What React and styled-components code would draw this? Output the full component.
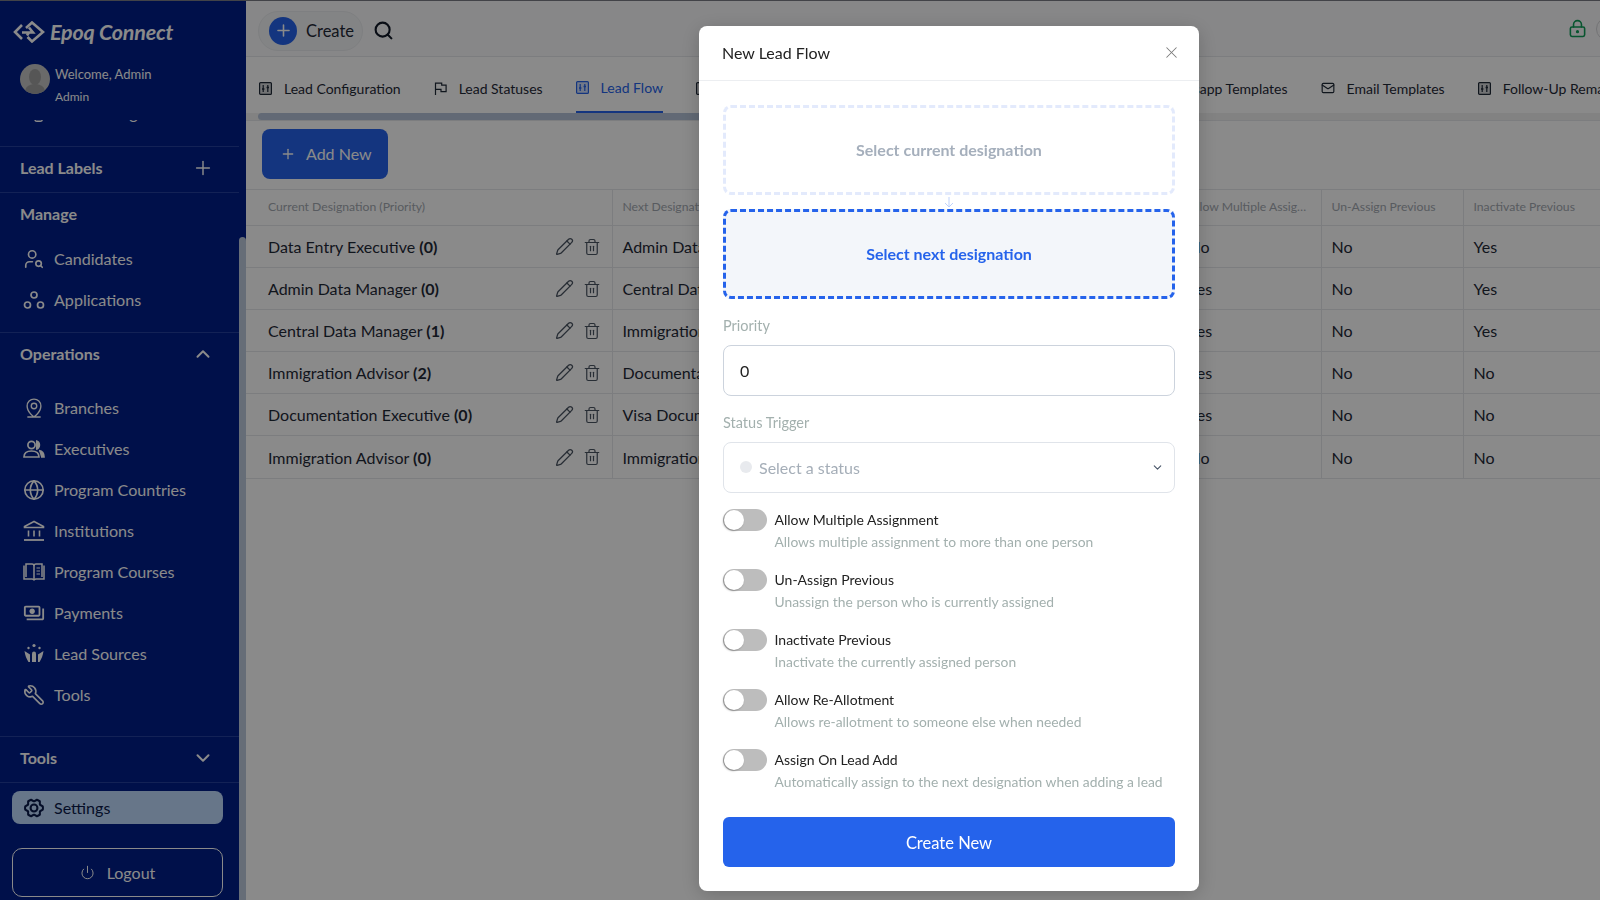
import React from "react";
import styled, { createGlobalStyle } from "styled-components";
import {
  UserSearch,
  Plus,
  ChevronUp,
  ChevronDown,
  Globe,
  Wrench,
  Search,
  LockKeyhole,
  Trash2,
  Pencil,
  Mail,
  X,
  Power,
  Workflow,
} from "lucide-react";
import { PiGearSixBold, PiMapPinLine } from "react-icons/pi";
import { MdOutlinePayments } from "react-icons/md";

const GlobalStyle = createGlobalStyle`
  html, body {
    margin: 0;
    padding: 0;
    height: 100%;
    background: #fff;
    font-family: Lato, "Open Sans", sans-serif;
    color: #1f2937;
  }
  * { box-sizing: border-box; }
`;

const Page = styled.div`
  display: grid;
  grid-template-columns: 246px 1fr;
  width: 1600px;
  height: 900px;
  overflow: hidden;
  border-top: 1px solid #7a7d85;
`;

const Sidebar = styled.aside`
  display: flex;
  flex-direction: column;
  height: 899px;
  background: #001e89;
  color: #fff;
  overflow: hidden;
`;

const Brand = styled.div`
  display: flex;
  align-items: center;
  gap: 5px;
  height: 45px;
  padding: 17px 0 0 13px;
  font-size: 21.5px;
  font-style: italic;
  font-weight: 700;
  letter-spacing: -0.2px;
`;

const UserBox = styled.div`
  display: flex;
  gap: 5px;
  height: 72px;
  padding: 18px 0 0 20px;
`;

const Avatar = styled.div`
  position: relative;
  width: 30px;
  height: 30px;
  border-radius: 50%;
  background: #c4c4c4;
  overflow: hidden;
  flex-shrink: 0;
  &::before {
    content: "";
    position: absolute;
    left: 9px;
    top: 5px;
    width: 12px;
    height: 16px;
    border-radius: 50%;
    background: #a0a0a0;
  }
  &::after {
    content: "";
    position: absolute;
    left: 5px;
    top: 20px;
    width: 20px;
    height: 14px;
    border-radius: 50%;
    background: #a0a0a0;
  }
`;

const UserText = styled.div`
  display: flex;
  flex-direction: column;
  gap: 8px;
  margin-top: 2px;
  font-size: 13px;
  line-height: 16px;
  small {
    font-size: 12px;
    line-height: 14px;
  }
`;

const SideScroll = styled.div`
  display: grid;
  grid-template-columns: 239px 7px;
  flex: 1;
  min-height: 0;
`;

const SideContent = styled.div`
  overflow: hidden;
`;

const ScrollTrack = styled.div`
  padding-top: 119px;
`;

const ScrollThumb = styled.div`
  height: 100%;
  border-radius: 4px 4px 0 0;
  background: #bcc9dc;
`;

const ClippedItem = styled.div`
  height: 26px;
  margin-top: 2px;
  overflow: hidden;
`;

const GroupHead = styled.div`
  display: flex;
  align-items: center;
  justify-content: space-between;
  height: ${(p) => p.$h || 46}px;
  padding: ${(p) => (p.$h ? 0 : "0 25px 4px 20px")};
  font-size: 16px;
  font-weight: 700;
  border-top: 1px solid #23409f;
`;

const NavList = styled.div`
  display: flex;
  flex-direction: column;
  padding: ${(p) => p.$pad};
`;

const NavItem = styled.div`
  display: flex;
  align-items: center;
  gap: 9px;
  height: 41px;
  margin-top: ${(p) => p.$shift || 0}px;
  padding-left: 23px;
  font-size: 16.1px;
  svg {
    width: 22px;
    height: 22px;
    flex-shrink: 0;
  }
`;

const FlippedWrench = styled(Wrench)`
  transform: scaleX(-1);
`;

const SettingsPill = styled.div`
  display: flex;
  align-items: center;
  gap: 9px;
  height: 33px;
  margin: 8px 16px 0 12px;
  padding-left: 11px;
  border-radius: 8px;
  background: #bfdbfe;
  color: #0b1a4a;
  font-size: 16.1px;
  svg {
    width: 22px;
    height: 22px;
  }
`;

const Logout = styled.div`
  display: flex;
  align-items: center;
  justify-content: center;
  gap: 12px;
  height: 49px;
  margin: 24px 16px 0 12px;
  border: 1px solid #fff;
  border-radius: 10px;
  font-size: 16px;
  svg {
    width: 15px;
    height: 15px;
  }
`;

const Main = styled.main`
  min-width: 0;
  overflow: hidden;
`;

const TopBar = styled.header`
  display: flex;
  align-items: center;
  height: 56px;
  padding: 4px 0 0 12px;
  background: #f9fafb;
  border-bottom: 1px solid #e5e7eb;
`;

const CreatePill = styled.div`
  display: flex;
  align-items: center;
  gap: 9px;
  width: 105px;
  height: 40px;
  padding-left: 10px;
  border: 1px solid #e9ebee;
  border-radius: 20px;
  background: #f3f4f6;
  font-size: 16.5px;
`;

const RoundPlus = styled.span`
  display: flex;
  align-items: center;
  justify-content: center;
  width: 28px;
  height: 28px;
  border-radius: 50%;
  background: #2563eb;
  color: #fff;
`;

const SearchBtn = styled.span`
  display: flex;
  margin-left: 10px;
  color: #111827;
`;

const TopRight = styled.div`
  display: flex;
  align-items: center;
  gap: 9px;
  margin: -4px -20px 0 auto;
  color: #0f9d58;
`;

const TopAvatar = styled.span`
  width: 24px;
  height: 24px;
  border: 1px solid #d4d4d8;
  border-radius: 50%;
`;

const TabBar = styled.nav`
  display: flex;
  gap: 33px;
  height: 56px;
  padding: 0 0 0 13px;
  overflow: hidden;
  white-space: nowrap;
`;

const Tab = styled.div`
  display: flex;
  align-items: center;
  gap: 12px;
  flex-shrink: 0;
  margin-left: ${(p) => p.$nudge || 0}px;
  padding-top: 6px;
  font-size: 14px;
  color: ${(p) => (p.$active ? "#2563eb" : "#1f2937")};
  border-bottom: ${(p) => (p.$active ? "2px solid #2563eb" : "0")};
`;

const TabScroll = styled.div`
  height: 8px;
  padding-left: 12px;
  background: #f1f1f1;
  border-bottom: 1px solid #e5e7eb;
`;

const TabThumb = styled.div`
  width: 760px;
  height: 7px;
  border-radius: 4px;
  background: #b5c3d8;
`;

const Toolbar = styled.div`
  padding: 8px 16px 10px;
`;

const AddButton = styled.button`
  display: flex;
  align-items: center;
  gap: 10px;
  width: 126px;
  height: 50px;
  padding: 0 0 1px 18px;
  border: 0;
  border-radius: 8px;
  background: #2563eb;
  color: #fff;
  font: 400 16px Lato, sans-serif;
`;

const Table = styled.table`
  width: 1354px;
  table-layout: fixed;
  border-collapse: collapse;
  border-top: 1px solid #e5e7eb;
  font-size: 16px;

  th {
    height: 36px;
    padding: 0 10px 2px;
    text-align: left;
    font-size: 12.2px;
    font-weight: 400;
    color: #a3a9b1;
    white-space: nowrap;
    overflow: hidden;
    text-overflow: ellipsis;
    border-right: 1px solid #e5e7eb;
    border-bottom: 1px solid #e5e7eb;
  }
  th:first-child, td:first-child {
    padding-left: 22px;
    padding-right: 11px;
  }
  td {
    height: 42px;
    padding: 0 10px;
    white-space: nowrap;
    overflow: hidden;
    border-right: 1px solid #e5e7eb;
    border-bottom: 1px solid #e5e7eb;
  }
  tr:last-child td {
    height: 43px;
  }
  th:last-child, td:last-child {
    border-right: 0;
  }
`;

const CellRow = styled.div`
  display: flex;
  align-items: center;
  justify-content: space-between;
  b {
    font-weight: 700;
  }
`;

const RowActions = styled.span`
  display: flex;
  align-items: center;
  gap: 9px;
  color: #4b5563;
`;

const Overlay = styled.div`
  position: fixed;
  inset: 0;
  display: flex;
  align-items: flex-start;
  padding: 26px 0 0 699px;
  background: rgba(0, 0, 0, 0.46);
`;

const Modal = styled.div`
  width: 500px;
  height: 865px;
  border-radius: 8px;
  background: #fff;
  box-shadow: 0 4px 20px rgba(0, 0, 0, 0.2);
`;

const ModalHead = styled.div`
  display: flex;
  align-items: center;
  justify-content: space-between;
  height: 55px;
  padding: 0 18px 2px 23px;
  border-bottom: 1px solid #eceef1;
  font-size: 16px;
  color: #222;
  svg {
    color: #7b7b7b;
  }
`;

const ModalBody = styled.div`
  padding: 24px 24px 24px;
`;

const DesignationBox = styled.div`
  display: flex;
  align-items: center;
  justify-content: center;
  height: 90px;
  padding-bottom: 2px;
  border-radius: 8px;
  border: 3px dashed ${(p) => (p.$active ? "#2563eb" : "#e3eafc")};
  background: ${(p) => (p.$active ? "#f3f6fa" : "#fff")};
  color: ${(p) => (p.$active ? "#2563eb" : "#a5afbc")};
  font-size: 16px;
  font-weight: 700;
`;

const Connector = styled.div`
  display: flex;
  justify-content: center;
  height: 14px;
  color: #bfd2fb;
`;

const FieldLabel = styled.label`
  display: block;
  margin-top: ${(p) => p.$top}px;
  font-size: 14.5px;
  line-height: 20px;
  color: #a3b0ae;
`;

const InputBox = styled.div`
  display: flex;
  align-items: center;
  height: 51px;
  margin-top: 9px;
  padding: ${(p) => (p.$soft ? "0 16px 1px" : "0 16px")};
  border: 1px solid ${(p) => (p.$soft ? "#e0e4ea" : "#ccd3dd")};
  border-radius: 8px;
  font-size: 16px;
  color: ${(p) => (p.$soft ? "#a5aeb8" : "#222")};
`;

const StatusDot = styled.span`
  width: 12px;
  height: 12px;
  margin-right: 7px;
  border-radius: 50%;
  background: #e8eaee;
`;

const SelectChevron = styled.span`
  display: flex;
  margin-left: auto;
  margin-right: -6px;
  color: #475467;
`;

const ToggleList = styled.div`
  display: flex;
  flex-direction: column;
  gap: 16px;
  margin-top: 16px;
`;

const ToggleRow = styled.div`
  display: flex;
  gap: 7.5px;
  height: 44px;
`;

const Switch = styled.span`
  position: relative;
  width: 44px;
  height: 22px;
  border-radius: 11px;
  background: #bdbdbd;
  flex-shrink: 0;
  &::after {
    content: "";
    position: absolute;
    left: 1px;
    top: 1px;
    width: 20px;
    height: 20px;
    border-radius: 50%;
    background: #fff;
    box-shadow: -1px 1px 2px rgba(0, 0, 0, 0.3);
  }
`;

const ToggleText = styled.div`
  font-size: 14px;
  line-height: 22px;
  color: #222;
  small {
    display: block;
    font-size: 13.85px;
    color: #a3b0ae;
  }
`;

const SubmitButton = styled.button`
  display: block;
  width: 100%;
  height: 50px;
  margin-top: 24px;
  padding-top: 2px;
  border: 0;
  border-radius: 6px;
  background: #2563eb;
  color: #fff;
  font: 400 16.5px Lato, sans-serif;
`;

const LogoMark = () => (
  <svg width="32" height="22" viewBox="0 0 32 22" fill="none" stroke="currentColor" strokeWidth="2.6">
    <path d="M9 4 2 11l7 7" />
    <path d="M13 7 19 1.5 30 11 19 20.5 14.5 16" />
    <path d="M9 11.5h11l-4-5M16 11.5l-2 3" />
  </svg>
);

const SlidersBox = () => (
  <svg width="13" height="13" viewBox="0 0 13 13" fill="none" stroke="currentColor" strokeWidth="1.2">
    <rect x=".6" y=".6" width="11.8" height="11.8" rx="1" fill="currentColor" fillOpacity=".2" />
    <path d="M4.2 3v7M8.8 3v7" />
    <path d="M3 7h2.4M7.6 5.5H10" strokeWidth="1.6" />
  </svg>
);

const FlagIcon = () => (
  <svg width="13" height="13" viewBox="0 0 13 13" fill="none" stroke="currentColor" strokeWidth="1.2">
    <path d="M1.5 13V1.2h6.2v2h4.4v6.4H7V7.4H1.5" />
  </svg>
);

const CirclesIcon = () => (
  <svg viewBox="0 0 22 22" fill="none" stroke="currentColor" strokeWidth="1.7">
    <circle cx="11" cy="6" r="3" />
    <circle cx="4.5" cy="16" r="3" />
    <circle cx="17.5" cy="16" r="3" />
  </svg>
);

const TeamIcon = () => (
  <svg viewBox="0 0 22 22" fill="none" stroke="currentColor" strokeWidth="1.7">
    <circle cx="8.5" cy="7" r="3.6" />
    <path d="M1 19c0-4 3-6 7.500-6s7.500 2 7.500 6z" />
    <path d="M13 2.800a4.300 4.300 0 0 1 0 8.400" fill="currentColor" />
    <path d="M16 12.500c3.500.5 5 3.500 5 6.500h-3" fill="currentColor" />
  </svg>
);

const BankIcon = () => (
  <svg viewBox="0 0 22 22" fill="none" stroke="currentColor" strokeWidth="1.6">
    <path d="M11 1.500 1.500 6.500v1h19v-1z" />
    <path d="M5.500 10.500v6M11 10.500v6M16.500 10.500v6" />
    <path d="M1 20h20" strokeWidth="1.8" />
  </svg>
);

const BookIcon = () => (
  <svg viewBox="0 0 22 22" fill="none" stroke="currentColor" strokeWidth="1.5">
    <path d="M1 4.500V18h8c1 0 2 .8 2 .8s1-.8 2-.8h8V4.500" />
    <path d="M3 16V3h6c1.200 0 2 1 2 2.200V18.500M19 16V3h-6c-1.200 0-2 1-2 2.200" />
    <path d="M13.500 7H17M13.500 10H17M13.500 13H17" strokeWidth="1.2" />
  </svg>
);

const PeopleRaysIcon = () => (
  <svg viewBox="0 0 22 22" fill="currentColor">
    <circle cx="11" cy="2.500" r="1.600" />
    <circle cx="5.500" cy="5" r="1.200" />
    <circle cx="16.500" cy="5" r="1.200" />
    <path d="M9 10.500a2 2 0 0 1 4 0V19H9z" />
    <path d="M1.500 8 7 11.500V19H5.500C3.500 16 2 12 1.500 8zM20.500 8 15 11.500V19h1.500c2-3 3.500-7 4-11z" />
  </svg>
);

const rows = [
  ["Data Entry Executive", 0, "Admin Data Manager", "No", "No", "Yes"],
  ["Admin Data Manager", 0, "Central Data Manager", "Yes", "No", "Yes"],
  ["Central Data Manager", 1, "Immigration Advisor", "Yes", "No", "Yes"],
  ["Immigration Advisor", 2, "Documentation Executive", "Yes", "No", "No"],
  ["Documentation Executive", 0, "Visa Documentation Executive", "Yes", "No", "No"],
  ["Immigration Advisor", 0, "Immigration Manager", "No", "No", "No"],
];

const toggles = [
  ["Allow Multiple Assignment", "Allows multiple assignment to more than one person"],
  ["Un-Assign Previous", "Unassign the person who is currently assigned"],
  ["Inactivate Previous", "Inactivate the currently assigned person"],
  ["Allow Re-Allotment", "Allows re-allotment to someone else when needed"],
  ["Assign On Lead Add", "Automatically assign to the next designation when adding a lead"],
];

export default function App() {
  return (
    <>
      <GlobalStyle />
      <Page>
        <Sidebar>
          <Brand>
            <LogoMark />
            Epoq Connect
          </Brand>
          <UserBox>
            <Avatar />
            <UserText>
              Welcome, Admin
              <small>Admin</small>
            </UserText>
          </UserBox>
          <SideScroll>
            <SideContent>
              <ClippedItem>
                <NavItem $shift={-28}>
                  <Workflow strokeWidth={1.6} />
                  Onboarding
                </NavItem>
              </ClippedItem>
              <GroupHead>
                Lead Labels
                <Plus size={22} strokeWidth={1.6} />
              </GroupHead>
              <GroupHead>Manage</GroupHead>
              <NavList $pad="0 0 12px">
                <NavItem>
                  <UserSearch strokeWidth={1.8} />
                  Candidates
                </NavItem>
                <NavItem>
                  <CirclesIcon />
                  Applications
                </NavItem>
              </NavList>
              <GroupHead>
                Operations
                <ChevronUp size={22} strokeWidth={2.2} />
              </GroupHead>
              <NavList $pad="9px 0 21px">
                <NavItem><PiMapPinLine />Branches</NavItem>
                <NavItem><TeamIcon />Executives</NavItem>
                <NavItem><Globe strokeWidth={1.8} />Program Countries</NavItem>
                <NavItem><BankIcon />Institutions</NavItem>
                <NavItem><BookIcon />Program Courses</NavItem>
                <NavItem><MdOutlinePayments />Payments</NavItem>
                <NavItem><PeopleRaysIcon />Lead Sources</NavItem>
                <NavItem><FlippedWrench strokeWidth={1.8} />Tools</NavItem>
              </NavList>
              <GroupHead>
                Tools
                <ChevronDown size={22} strokeWidth={2.2} />
              </GroupHead>
              <GroupHead $h={1} />
              <SettingsPill>
                <PiGearSixBold />
                Settings
              </SettingsPill>
              <Logout>
                <Power strokeWidth={1.6} />
                Logout
              </Logout>
            </SideContent>
            <ScrollTrack>
              <ScrollThumb />
            </ScrollTrack>
          </SideScroll>
        </Sidebar>

        <Main>
          <TopBar>
            <CreatePill>
              <RoundPlus>
                <Plus size={19} />
              </RoundPlus>
              Create
            </CreatePill>
            <SearchBtn>
              <Search size={21} strokeWidth={2.4} />
            </SearchBtn>
            <TopRight>
              <LockKeyhole size={19} />
              <TopAvatar />
            </TopRight>
          </TopBar>
          <TabBar>
            <Tab><SlidersBox />Lead Configuration</Tab>
            <Tab><FlagIcon />Lead Statuses</Tab>
            <Tab $active><SlidersBox />Lead Flow</Tab>
            <Tab><SlidersBox />Lead Assignment Rules</Tab>
            <Tab $nudge={-1}><SlidersBox />SMS &amp; Notification Templates</Tab>
            <Tab><SlidersBox />Whatsapp Templates</Tab>
            <Tab><Mail size={14} />Email Templates</Tab>
            <Tab><SlidersBox />Follow-Up Remarks</Tab>
          </TabBar>
          <TabScroll>
            <TabThumb />
          </TabScroll>
          <Toolbar>
            <AddButton>
              <Plus size={16} />
              Add New
            </AddButton>
          </Toolbar>
          <Table>
            <colgroup>
              <col style={{ width: 366 }} />
              <col style={{ width: 566 }} />
              <col style={{ width: 143 }} />
              <col style={{ width: 142 }} />
              <col />
            </colgroup>
            <thead>
              <tr>
                <th>Current Designation (Priority)</th>
                <th>Next Designation</th>
                <th>Allow Multiple Assignment</th>
                <th>Un-Assign Previous</th>
                <th>Inactivate Previous</th>
              </tr>
            </thead>
            <tbody>
              {rows.map((r, i) => (
                <tr key={i}>
                  <td>
                    <CellRow>
                      <span>
                        {r[0]} <b>({r[1]})</b>
                      </span>
                      <RowActions>
                        <Pencil size={19} strokeWidth={1.6} />
                        <Trash2 size={18} strokeWidth={1.6} />
                      </RowActions>
                    </CellRow>
                  </td>
                  <td>{r[2]}</td>
                  <td>{r[3]}</td>
                  <td>{r[4]}</td>
                  <td>{r[5]}</td>
                </tr>
              ))}
            </tbody>
          </Table>
        </Main>
      </Page>

      <Overlay>
        <Modal>
          <ModalHead>
            New Lead Flow
            <X size={19} strokeWidth={1.3} />
          </ModalHead>
          <ModalBody>
            <DesignationBox>Select current designation</DesignationBox>
            <Connector>
              <svg width="10" height="14" viewBox="0 0 10 14" fill="none" stroke="currentColor" strokeWidth="1">
                <path d="M5 2v10M1 8l4 4 4-4" />
              </svg>
            </Connector>
            <DesignationBox $active>Select next designation</DesignationBox>
            <FieldLabel $top={17}>Priority</FieldLabel>
            <InputBox>0</InputBox>
            <FieldLabel $top={17}>Status Trigger</FieldLabel>
            <InputBox $soft>
              <StatusDot />
              Select a status
              <SelectChevron>
                <ChevronDown size={13} strokeWidth={2} />
              </SelectChevron>
            </InputBox>
            <ToggleList>
              {toggles.map(([label, desc]) => (
                <ToggleRow key={label}>
                  <Switch />
                  <ToggleText>
                    {label}
                    <small>{desc}</small>
                  </ToggleText>
                </ToggleRow>
              ))}
            </ToggleList>
            <SubmitButton>Create New</SubmitButton>
          </ModalBody>
        </Modal>
      </Overlay>
    </>
  );
}
